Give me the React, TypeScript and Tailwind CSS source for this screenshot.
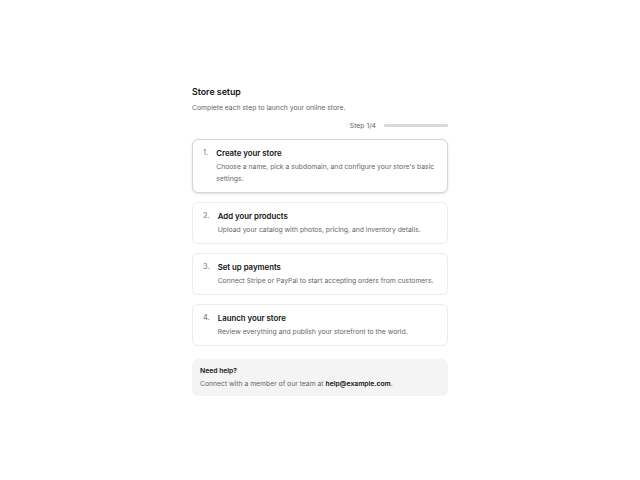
import React from 'react';

type Step = {
  title: string;
  description: string;
};

const STEPS: Step[] = [
  {
    title: 'Create your store',
    description: "Choose a name, pick a subdomain, and configure your store's basic settings.",
  },
  {
    title: 'Add your products',
    description: 'Upload your catalog with photos, pricing, and inventory details.',
  },
  {
    title: 'Set up payments',
    description: 'Connect Stripe or PayPal to start accepting orders from customers.',
  },
  {
    title: 'Launch your store',
    description: 'Review everything and publish your storefront to the world.',
  },
];

const App: React.FC = () => {
  const current = 0;

  return (
    <div className="min-h-screen flex items-center justify-center bg-white font-['Inter',sans-serif] antialiased">
      <div className="w-[256px]">
        <h1 className="text-[8.8px] leading-[14px] font-semibold text-[#111]">Store setup</h1>
        <p className="mt-[3px] text-[6.8px] leading-[12px] text-[#666]">Complete each step to launch your online store.</p>

        <div className="mt-[6px] flex items-center justify-end gap-2">
          <span className="text-[6.8px] leading-[12px] text-[#666]">
            Step {current + 1}/{STEPS.length}
          </span>
          <div className="w-[64px] h-[3px] rounded-full bg-[#d9d9d9]" />
        </div>

        <ol className="mt-[7px] flex flex-col gap-[9px]">
          {STEPS.map((step, i) => (
            <li
              key={step.title}
              className={
                i === current
                  ? 'flex gap-[8px] rounded-[6px] border border-[#d6d6d6] bg-white px-[10px] py-[7px] shadow-sm'
                  : 'flex gap-[8px] rounded-[6px] border border-[#ececec] bg-white px-[10px] py-[7px]'
              }
            >
              <span className="text-[7.5px] leading-[12px] text-[#777]">{i + 1}.</span>
              <div className="flex-1">
                <h2 className="text-[7.8px] leading-[12px] font-semibold text-[#111]">{step.title}</h2>
                <p className="mt-[2px] text-[6.8px] leading-[12px] text-[#666]">{step.description}</p>
              </div>
            </li>
          ))}
        </ol>

        <div className="mt-[13px] rounded-[6px] bg-[#f4f4f4] px-[8px] py-[6px]">
          <p className="text-[6.8px] leading-[12px] font-semibold text-[#111]">Need help?</p>
          <p className="mt-[1px] text-[6.8px] leading-[12px] text-[#666]">
            Connect with a member of our team at{' '}
            <span className="font-semibold text-[#111]">help@example.com</span>.
          </p>
        </div>
      </div>
    </div>
  );
};

export default App;
